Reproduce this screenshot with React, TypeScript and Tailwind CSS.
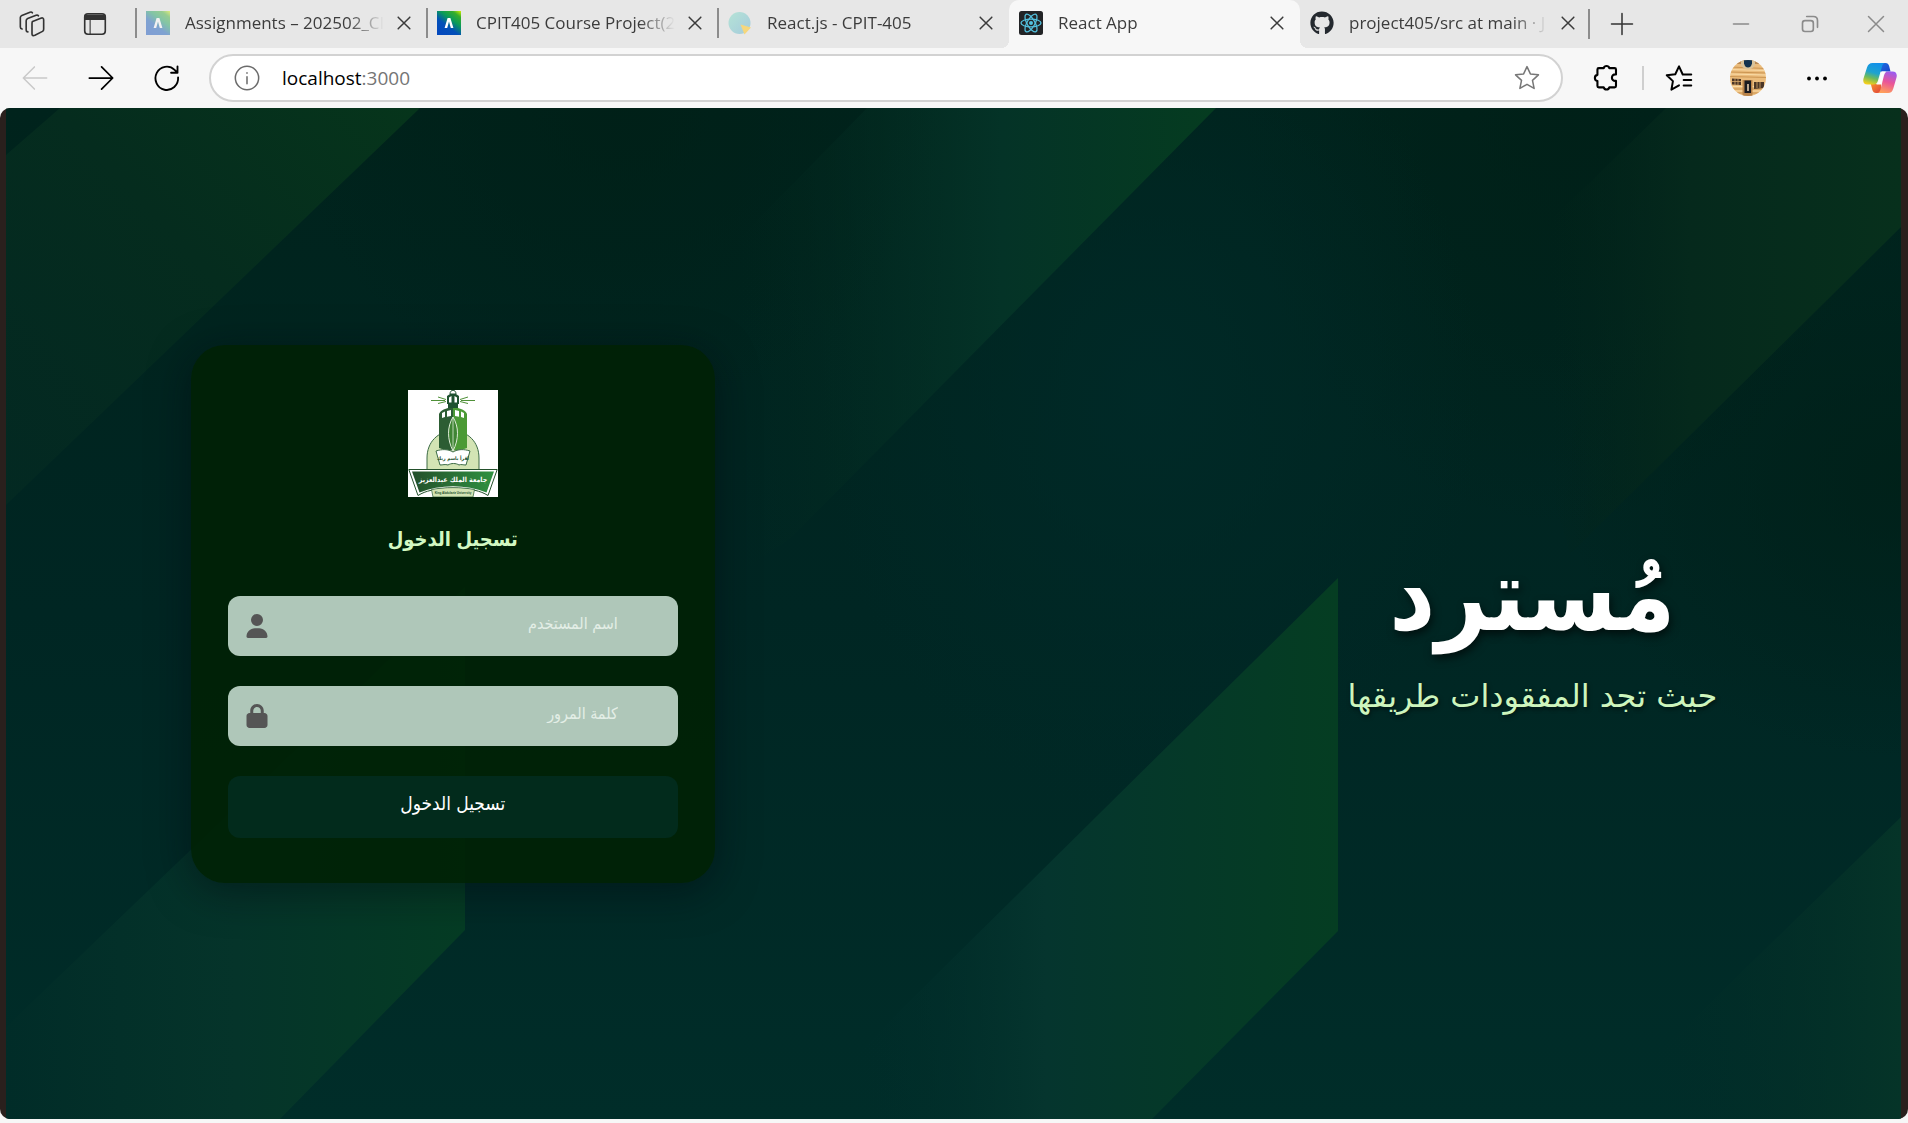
import type { ReactNode } from "react";
import { FaGithub } from "react-icons/fa";
import { FaLock, FaUser } from "react-icons/fa6";

function BlackboardIcon({ id, faded }: { id: string; faded?: boolean }) {
  return (
    <svg viewBox="0 0 24 24" className={faded ? "size-6 opacity-45" : "size-6"} aria-hidden="true">
      <defs>
        <linearGradient id={id} x1="1" y1="0" x2="0.25" y2="1">
          <stop offset="0" stopColor="#d4f000" />
          <stop offset="0.18" stopColor="#35ad2c" />
          <stop offset="0.42" stopColor="#0a9a5a" />
          <stop offset="0.68" stopColor="#0350b8" />
          <stop offset="1" stopColor="#0449bd" />
        </linearGradient>
      </defs>
      <rect width="24" height="24" fill={`url(#${id})`} />
      <path d="M10.6 7h2.8l3 10h-2.6L12 10.400l-1.800 6.600H7.600z" fill="#fff" />
    </svg>
  );
}

function SiteIcon() {
  return (
    <svg viewBox="0 0 24 24" className="size-6" aria-hidden="true">
      <defs>
        <linearGradient id="site" x1="0" y1="0" x2="1" y2="1">
          <stop offset="0" stopColor="#b5e3d6" />
          <stop offset="1" stopColor="#a5cbdc" />
        </linearGradient>
      </defs>
      <circle cx="11.500" cy="12" r="11" fill="url(#site)" />
      <path d="M12.500 13.500 23 16.500 16.500 23.500z" fill="#f6d77c" />
    </svg>
  );
}

function ReactIcon() {
  return (
    <svg viewBox="0 0 24 24" className="size-6" aria-hidden="true">
      <rect width="24" height="24" rx="2.500" fill="#222426" />
      <g fill="none" stroke="#53c1de" strokeWidth="1.300">
        <ellipse cx="12" cy="12" rx="10" ry="3.900" />
        <ellipse cx="12" cy="12" rx="10" ry="3.900" transform="rotate(60 12 12)" />
        <ellipse cx="12" cy="12" rx="10" ry="3.900" transform="rotate(120 12 12)" />
      </g>
      <circle cx="12" cy="12" r="2" fill="#53c1de" />
    </svg>
  );
}

function Line({ children, className = "size-6", width = 1.5 }: { children: ReactNode; className?: string; width?: number }) {
  return (
    <svg
      viewBox="0 0 24 24"
      className={className}
      fill="none"
      stroke="currentColor"
      strokeWidth={width}
      strokeLinecap="round"
      strokeLinejoin="round"
      aria-hidden="true"
    >
      {children}
    </svg>
  );
}

function CopilotIcon() {
  return (
    <svg viewBox="0 0 34 32" className="h-8 w-[34px]" aria-hidden="true">
      <defs>
        <linearGradient id="cpA" x1="0.600" y1="0" x2="0.300" y2="1">
          <stop offset="0" stopColor="#1190ea" />
          <stop offset="0.450" stopColor="#1ea3cf" />
          <stop offset="0.700" stopColor="#6cba5c" />
          <stop offset="1" stopColor="#f5cf1a" />
        </linearGradient>
        <linearGradient id="cpB" x1="0.700" y1="0" x2="0.400" y2="1">
          <stop offset="0" stopColor="#9a5cf0" />
          <stop offset="0.500" stopColor="#ea5598" />
          <stop offset="1" stopColor="#ff9f5a" />
        </linearGradient>
        <linearGradient id="cpC" x1="0" y1="0" x2="1" y2="1">
          <stop offset="0" stopColor="#1a6fe0" />
          <stop offset="1" stopColor="#1c45cc" />
        </linearGradient>
        <linearGradient id="cpD" x1="0" y1="0" x2="1" y2="1">
          <stop offset="0" stopColor="#f7902c" />
          <stop offset="1" stopColor="#e0433c" />
        </linearGradient>
      </defs>
      <path d="M16 1h6.500c2 0 3 1 3.600 3L27.500 9.500H16z" fill="url(#cpC)" />
      <path d="M18 31h-5c-2 0-3-1-3.600-3L7.800 22H18z" fill="url(#cpD)" />
      <path d="M9.500 1H22.500c-2 0-2.800 1.400-3.400 3.200L15 18.500c-.8 2.600-1.800 4-4.200 4H4.500C1 22.500-.4 20 .5 16.500L4 5.500C5 2.500 6.500 1 9.500 1z" fill="url(#cpA)" />
      <path d="M25 31H14c2 0 2.800-1.400 3.400-3.200L21 13.500c.8-2.800 1.800-4 4.200-4h4.300c3.500 0 4.900 2.500 4 6L30.300 26.500c-1 3-2.300 4.500-5.300 4.500z" fill="url(#cpB)" />
      <path d="M19 9.500h4.200c-1.400.4-2.200 1.600-2.900 4l-2.200 9H13c1.600-.4 2.400-1.600 3-4z" fill="#fdfdfd" />
    </svg>
  );
}

function Avatar() {
  return (
    <svg viewBox="0 0 36 36" className="size-9 rounded-full" aria-hidden="true">
      <rect width="36" height="36" fill="#ebbc7c" />
      <path d="M0 0h36v4H0z" fill="#b98a55" />
      <g stroke="#cc9653" strokeWidth="1">
        <path d="M0 7l36 1.500M0 12l36 1M0 16.500l36 1M0 29h36M0 33h36" />
      </g>
      <g stroke="#f9dba6" strokeWidth="1">
        <path d="M0 9.500l36 1M0 14l36 1M0 26.500h36M0 31h36" />
      </g>
      <path d="M11 0h14v5c-2 3.500-4.500 4.500-7 4.500S13 8.500 11 5z" fill="#d9c39a" />
      <path d="M14 0h8v3.500c-1 3-2 4-4 4s-3-1-4-4z" fill="#12324e" />
      <path d="M2 18.500l9 .5v6l-9-.500zM24 22h10v6l-10 1z" fill="#4a3526" />
      <path d="M5 18v7M8 18v7M27 22v6M30 22v6M2 21.500h9" stroke="#d9a868" strokeWidth=".8" />
      <path d="M12.500 20h10v16h-10z" fill="#b9834a" />
      <path d="M14.500 20.500h6.500V33h-6.500z" fill="#191a20" />
      <path d="M17 24h2v7h-2z" fill="#b9a58e" />
    </svg>
  );
}

function UniversityLogo() {
  return (
    <svg viewBox="0 0 90 107" className="h-[107px] w-[90px]" role="img" aria-label="جامعة الملك عبدالعزيز">
      <defs>
        <linearGradient id="ban" x1="0" x2="1">
          <stop offset="0" stopColor="#23502b" />
          <stop offset="1" stopColor="#2f9140" />
        </linearGradient>
      </defs>
      <rect width="90" height="107" fill="#fff" />
      <path d="M19 82V68c0-16 11-27 26-27s26 11 26 27v14z" fill="#d3e4b4" stroke="#3c6b45" strokeWidth="1" />
      <g stroke="#4f9038" strokeWidth="1">
        <path d="M23 10.500h14M30 7l8 2.500M30 13.500l8-2M67 10.500H53M60 7l-8 2.500M60 13.500l-8-2" />
      </g>
      <path d="M42 4c0-5 6-5 6 0z" fill="#fff" stroke="#1f5130" />
      <path d="M39 6l3-2h6l3 2v8H39z" fill="#1f5130" />
      <path d="M41 7.500l2.500-1.500v6.500H41zM46.500 6l2.500 1.500v5h-2.500z" fill="#fff" />
      <path d="M40 14h10v5H40z" fill="#1f5130" />
      <path d="M31 24c1-3 5-5 9-6h5v42l-5 1-9-3z" fill="#2c5d33" />
      <path d="M59 24c-1-3-5-5-9-6h-5v42l5 1 9-3z" fill="#4b9a35" />
      <path d="M34 23l3-1.500V27l-3 1zM39 21l4-1v6l-4 .7zM56 23l-3-1.500V27l3 1zM51 21l-4-1v6l4 .7z" fill="#fff" />
      <path d="M45 27c-6 10-6 22 0 34 6-12 6-24 0-34z" fill="#3f8434" stroke="#dcebd4" strokeWidth="1" />
      <path d="M45 27v34" stroke="#dcebd4" strokeWidth=".8" />
      <path d="M28 61c6-2 12-2 17 1 5-3 11-3 17-1l-4 14c-3 0-5-1-7 0-3-2-8-2-11 0-3-1-5 0-8 0z" fill="#fff" stroke="#3c6b45" />
      <text x="45" y="70" textAnchor="middle" fontSize="5" fontWeight="bold" fill="#23502b" fontFamily="DejaVu Sans Condensed, DejaVu Sans, sans-serif">
        اقرأ باسم ربك
      </text>
      <path d="M.8 79.500h88.400L80 105.500c-4-2.500-8-4-13-5.200-14-3-30-3-44 0-5 1.200-9 2.700-13 5.200z" fill="#fff" stroke="#23502b" strokeWidth="1" />
      <path d="M4 81.500h82l-7.500 21c-21-8.500-46-8.500-67 0z" fill="url(#ban)" />
      <text x="45" y="92" textAnchor="middle" fontSize="7" fontWeight="bold" fill="#fff" fontFamily="DejaVu Sans Condensed, DejaVu Sans, sans-serif">
        جامعة الملك عبدالعزيز
      </text>
      <path d="M23.500 99.500c14-2.500 29-2.500 43 0l-1.500 7.500h-40z" fill="#d3e4b4" stroke="#3c6b45" strokeWidth=".8" />
      <text x="45" y="104" textAnchor="middle" fontSize="3" fontWeight="bold" fill="#23502b" fontFamily="Liberation Sans, sans-serif">
        King Abdulaziz University
      </text>
    </svg>
  );
}

function Backdrop() {
  return (
    <svg
      viewBox="6 108 1895 1011"
      preserveAspectRatio="none"
      className="absolute inset-y-0 left-[6px] h-full w-[calc(100%-13px)]"
      aria-hidden="true"
    >
      <defs>
        <linearGradient id="base" x1="0" y1="0" x2="0" y2="1">
          <stop offset="0" stopColor="#00231c" />
          <stop offset="0.500" stopColor="#002623" />
          <stop offset="1" stopColor="#002d29" />
        </linearGradient>
        <radialGradient id="dark" cx="0.500" cy="0.500" r="0.500">
          <stop offset="0" stopColor="#001f16" stopOpacity="0.700" />
          <stop offset="1" stopColor="#001f16" stopOpacity="0" />
        </radialGradient>
        <radialGradient id="teal" cx="0.500" cy="0.500" r="0.500">
          <stop offset="0" stopColor="#002a28" stopOpacity="0.900" />
          <stop offset="1" stopColor="#002a28" stopOpacity="0" />
        </radialGradient>
        <linearGradient id="s1" gradientUnits="userSpaceOnUse" x1="420" y1="108" x2="30" y2="470">
          <stop offset="0" stopColor="#06351b" />
          <stop offset="0.500" stopColor="#052c1e" />
          <stop offset="1" stopColor="#042a22" stopOpacity="0.800" />
        </linearGradient>
        <linearGradient id="s2" gradientUnits="userSpaceOnUse" x1="465" y1="0" x2="6" y2="0">
          <stop offset="0" stopColor="#053c24" />
          <stop offset="0.500" stopColor="#05342a" />
          <stop offset="1" stopColor="#012c28" />
        </linearGradient>
        <linearGradient id="s3" gradientUnits="userSpaceOnUse" x1="1216" y1="0" x2="740" y2="0">
          <stop offset="0" stopColor="#053c20" />
          <stop offset="0.450" stopColor="#043327" />
          <stop offset="1" stopColor="#03291f" stopOpacity="0" />
        </linearGradient>
        <linearGradient id="s4" gradientUnits="userSpaceOnUse" x1="1338" y1="0" x2="850" y2="0">
          <stop offset="0" stopColor="#053d22" />
          <stop offset="0.600" stopColor="#05352e" />
          <stop offset="1" stopColor="#002c2a" stopOpacity="0" />
        </linearGradient>
        <linearGradient id="s5" gradientUnits="userSpaceOnUse" x1="1901" y1="0" x2="1550" y2="0">
          <stop offset="0" stopColor="#07301c" />
          <stop offset="0.600" stopColor="#05291c" />
          <stop offset="1" stopColor="#03251b" stopOpacity="0" />
        </linearGradient>
        <linearGradient id="s6" gradientUnits="userSpaceOnUse" x1="1901" y1="0" x2="1650" y2="0">
          <stop offset="0" stopColor="#053428" />
          <stop offset="1" stopColor="#022c28" stopOpacity="0" />
        </linearGradient>
      </defs>
      <rect x="6" y="108" width="1895" height="1011" fill="url(#base)" />
      <ellipse cx="620" cy="108" rx="330" ry="300" fill="url(#dark)" />
      <ellipse cx="1560" cy="108" rx="320" ry="420" fill="url(#dark)" />
      <ellipse cx="1901" cy="480" rx="340" ry="280" fill="url(#dark)" />
      <ellipse cx="1150" cy="400" rx="330" ry="420" fill="url(#teal)" />
      <path d="M6 155 60 108H420L6 505z" fill="url(#s1)" />
      <path d="M465 587V930L280 1119H6V1027z" fill="url(#s2)" />
      <path d="M867 108H1216L791 538 700 600 640 340z" fill="url(#s3)" />
      <path d="M1338 578V931L1152 1119H790z" fill="url(#s4)" />
      <path d="M1666 108H1901V227L1570 554 1490 280z" fill="url(#s5)" />
      <path d="M1901 817V1119H1590z" fill="url(#s6)" />
    </svg>
  );
}

function CloseButton({ label }: { label: string }) {
  return (
    <button type="button" aria-label={label} className="flex size-6 shrink-0 items-center justify-center text-[#3b3b3b]">
      <Line className="size-5" width={1.8}>
        <path d="M5 5l14 14M19 5 5 19" />
      </Line>
    </button>
  );
}

function Tab({ icon, title, active, divider }: { icon: ReactNode; title: string; active?: boolean; divider?: boolean }) {
  return (
    <div
      className={
        active
          ? "relative flex h-12 w-[291px] min-w-0 items-center rounded-t-[10px] bg-[#f7f7f7] pr-[11px] pb-0.5 pl-[10px]"
          : "relative flex h-12 w-[291px] min-w-0 items-center pr-[11px] pb-0.5 pl-[10px]"
      }
    >
      {divider && <span className="absolute top-2 -left-px h-[30px] w-[2px] bg-[#8c8c8c]" />}
      {active && (
        <>
          <span className="absolute bottom-0 -left-2 size-2 bg-[radial-gradient(circle_at_0_0,#e7e7e7_8px,#f7f7f7_8px)]" />
          <span className="absolute -right-2 bottom-0 size-2 bg-[radial-gradient(circle_at_100%_0,#e7e7e7_8px,#f7f7f7_8px)]" />
        </>
      )}
      <button type="button" className="flex min-w-0 flex-1 items-center gap-[15px] text-left text-[#3c3c3c]">
        <span className="shrink-0">{icon}</span>
        <span className="min-w-0 flex-1 overflow-hidden text-[17px] whitespace-nowrap [mask-image:linear-gradient(to_right,#000_calc(100%-36px),transparent)]">
          {title}
        </span>
      </button>
      <span className="ml-2 flex">
        <CloseButton label={`Close ${title}`} />
      </span>
    </div>
  );
}

function IconButton({ label, children, className }: { label: string; children: ReactNode; className: string }) {
  return (
    <button type="button" aria-label={label} className={`flex h-9 shrink-0 items-center justify-center ${className}`}>
      {children}
    </button>
  );
}

function Field({ id, label, type, icon }: { id: string; label: string; type: string; icon: ReactNode }) {
  return (
    <div className="relative">
      <input
        id={id}
        type={type}
        dir="rtl"
        placeholder={label}
        aria-label={label}
        className="block h-[60px] w-full rounded-xl bg-[#afc7b9] pr-[60px] pb-1 pl-[60px] text-base text-[#1b1b1b] outline-none placeholder:text-[#e3eee6]"
      />
      <label
        htmlFor={id}
        className="pointer-events-none absolute top-[18px] left-[18px] flex h-6 w-[22px] items-center justify-center text-2xl text-[#555]"
      >
        {icon}
      </label>
    </div>
  );
}

export default function App() {
  return (
    <div className="flex min-h-screen flex-col bg-[#f7f7f7] pb-1 font-['Open_Sans','Noto_Sans',sans-serif]">
      <header>
        <div className="flex h-12 items-center bg-[#e7e7e7]">
          <IconButton label="Workspaces" className="w-16 text-[#333]">
            <Line className="size-7" width={1.4}>
              <path d="M12.500 9.800 19.500 7q2.500-.9 2.500 1.500v8q0 1.200-1 1.800l-6.500 3.400q-2.500 1-2.500-1.200V11.500q0-1.200.5-1.700z" />
              <path d="M8.500 18.800q-1.500 0-1.500-1.800V9.300q0-1.400 1.300-2L15.500 4.500q1.300-.5 2 .5M3.500 16.300Q2 16 2 14.500v-8Q2 5.300 3.300 4.700l7-2.800q1.300-.5 2 .500" />
            </Line>
          </IconButton>
          <IconButton label="Tab actions" className="w-[62px] text-[#333]">
            <Line className="size-[26px]">
              <rect x="2.500" y="2.500" width="19" height="19" rx="3" />
              <path d="M3 4h18v3.500H3z" fill="currentColor" />
              <path d="M7.500 8v13" strokeWidth="1" />
            </Line>
          </IconButton>
          <div className="ml-[10px] flex min-w-0">
            <Tab divider icon={<BlackboardIcon id="bbA" faded />} title="Assignments – 202502_CI" />
            <Tab divider icon={<BlackboardIcon id="bbB" />} title="CPIT405 Course Project(2" />
            <Tab divider icon={<SiteIcon />} title="React.js - CPIT-405" />
            <Tab active icon={<ReactIcon />} title="React App" />
            <Tab icon={<FaGithub className="size-6 text-[#24292f]" />} title="project405/src at main · J" />
          </div>
          <div className="-ml-[3px] h-[30px] w-[2px] shrink-0 bg-[#8c8c8c]" />
          <IconButton label="New tab" className="ml-1 w-14 text-[#333]">
            <Line className="size-7" width={1.3}>
              <path d="M12 3v18M3 12h18" />
            </Line>
          </IconButton>
          <div className="ml-auto flex text-[#8b8b8b]">
            <IconButton label="Minimize" className="w-[69px]">
              <Line className="size-5" width={2}>
                <path d="M3 12h18" />
              </Line>
            </IconButton>
            <IconButton label="Restore" className="w-[69px]">
              <Line className="size-5" width={2}>
                <rect x="3" y="8" width="13" height="13" rx="3" />
                <path d="M8 3h8q5 0 5 5v8" />
              </Line>
            </IconButton>
            <IconButton label="Close window" className="w-[64px]">
              <Line className="size-5" width={1.8}>
                <path d="M3 3l18 18M21 3 3 21" />
              </Line>
            </IconButton>
          </div>
        </div>

        <div className="flex h-[60px] items-center">
          <IconButton label="Back" className="ml-[5px] w-[60px] text-[#c9c9c9]">
            <Line className="size-7" width={1.3}>
              <path d="M22 12H2.500M11.500 2.500 2 12l9.500 9.500" />
            </Line>
          </IconButton>
          <IconButton label="Forward" className="w-[72px] text-black">
            <Line className="size-7" width={1.5}>
              <path d="M2 12h19.500M12.500 2.500 22 12l-9.500 9.500" />
            </Line>
          </IconButton>
          <IconButton label="Refresh" className="w-[60px] text-black">
            <Line className="size-7" width={1.6}>
              <path d="M21.500 11.500A9.700 10 0 1 1 18.500 5l2.500 2.500M21 2v5.500h-5.500" />
            </Line>
          </IconButton>
          <div className="ml-3 flex h-12 min-w-0 flex-1 items-center rounded-full border-2 border-[#d2d2d2] bg-white pr-[20px] pl-[22px]">
            <button type="button" aria-label="Site information" className="text-[#6b6b6b]">
              <Line className="size-7" width={1.3}>
                <circle cx="12" cy="12" r="10" />
                <path d="M12 11v6M12 7.500v.5" />
              </Line>
            </button>
            <div className="relative ml-[21px] flex-1 text-[19px]">
              <input
                aria-label="Address"
                defaultValue="localhost:3000"
                className="w-full bg-transparent text-transparent caret-black outline-none"
              />
              <span aria-hidden="true" className="pointer-events-none absolute inset-0 text-[#757575]">
                <span className="text-black">localhost</span>:3000
              </span>
            </div>
            <button type="button" aria-label="Add to favorites" className="text-[#777]">
              <Line className="size-7" width={1.3}>
                <path d="m12 2.200 2.900 6.300 6.900.8-5.100 4.700 1.400 6.900-6.100-3.500-6.100 3.500 1.400-6.900-5.100-4.700 6.900-.8z" />
              </Line>
            </button>
          </div>
          <IconButton label="Extensions" className="ml-5 w-12 text-black">
            <Line className="size-7" width={1.8}>
              <path d="M5 3.500h4.200a2.500 2.500 0 0 1 4.800 0h4.500q1.200 0 1.200 1.200v4.200h-.7a2.700 2.700 0 0 0 0 5.600h.7v4.300q0 1.200-1.200 1.200H14a2.500 2.500 0 0 1-4.800 0H5q-1.200 0-1.200-1.200v-4.200a2.700 2.700 0 0 1 0-5.300V4.700Q3.800 3.500 5 3.500z" />
            </Line>
          </IconButton>
          <div className="ml-[11px] h-6 w-[2px] bg-[#cfcfcf]" />
          <IconButton label="Favorites" className="ml-2 w-[54px] text-black">
            <Line className="size-7" width={1.7}>
              <path d="M22.500 9h-7.300L12 2 8.800 8.800 1.500 9.700l5.300 5-1.300 7.300L12 18.300M16 13.800h6.500M16 18.500h6.500" />
            </Line>
          </IconButton>
          <IconButton label="Profile" className="ml-6 w-9">
            <Avatar />
          </IconButton>
          <IconButton label="Settings and more" className="ml-[33px] w-9 text-black">
            <svg viewBox="0 0 24 24" className="size-6" fill="currentColor" aria-hidden="true">
              <circle cx="4" cy="12.500" r="1.900" />
              <circle cx="12" cy="12.500" r="1.900" />
              <circle cx="20" cy="12.500" r="1.900" />
            </svg>
          </IconButton>
          <IconButton label="Copilot" className="mr-[11px] ml-[28px] w-[34px]">
            <CopilotIcon />
          </IconButton>
        </div>
      </header>

      <main className="relative flex flex-1 items-center justify-between gap-8 overflow-hidden rounded-[10px] bg-[#2a201d] px-[10%] font-['Liberation_Sans','DejaVu_Sans_Condensed','DejaVu_Sans',sans-serif]">
        <Backdrop />
        <form
          dir="rtl"
          className="relative flex w-[524px] flex-col items-center rounded-[34px] bg-[#002104]/90 px-[37px] py-[45px] shadow-[0_8px_40px_rgba(0,10,16,0.5)]"
        >
          <UniversityLogo />
          <h2 className="mt-[26px] text-xl leading-8 font-bold text-[#d2f8c2]">تسجيل الدخول</h2>
          <div className="mt-[41px] flex w-full flex-col gap-[30px]">
            <Field id="username" label="اسم المستخدم" type="text" icon={<FaUser />} />
            <Field id="password" label="كلمة المرور" type="password" icon={<FaLock />} />
            <button type="button" className="h-[62px] w-full rounded-xl bg-[#022b1c] pb-1 text-[19px] text-white">
              تسجيل الدخول
            </button>
          </div>
        </form>
        <section dir="rtl" className="relative pt-8 text-center font-['DejaVu_Sans',sans-serif]">
          <h1 className="font-['DejaVu_Sans_Condensed','DejaVu_Sans',sans-serif] text-[100px] leading-[112px] font-bold text-white [text-shadow:2px_4px_8px_rgba(0,0,0,0.6)]">
            مُسترد
          </h1>
          <p className="mt-5 text-[32px] leading-[48px] text-[#cdf5bd] [text-shadow:1px_2px_4px_rgba(0,0,0,0.5)]">حيث تجد المفقودات طريقها</p>
        </section>
      </main>
    </div>
  );
}
